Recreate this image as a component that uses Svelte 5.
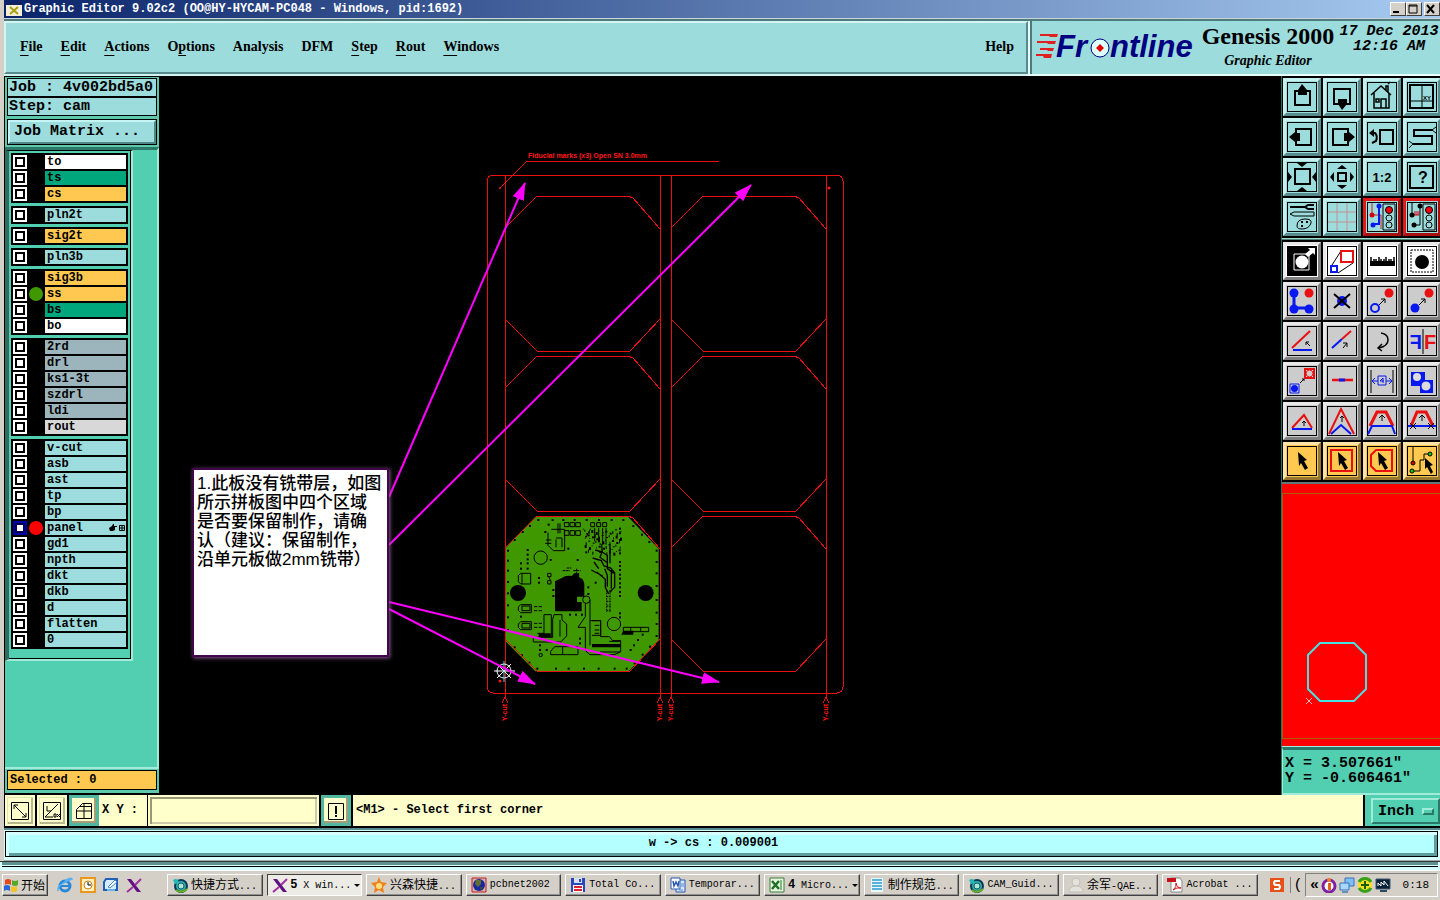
<script>
  const menus = [
    ['', 'F', 'ile'],
    ['', 'E', 'dit'],
    ['', 'A', 'ctions'],
    ['O', 'p', 'tions'],
    ['Analysis', '', ''],
    ['DFM', '', ''],
    ['', 'S', 'tep'],
    ['', 'R', 'out'],
    ['', 'W', 'indows'],
  ];

  const layerGroups = [
    [['to', 'white'], ['ts', 'green'], ['cs', 'orange']],
    [['pln2t', 'teal']],
    [['sig2t', 'orange']],
    [['pln3b', 'teal']],
    [['sig3b', 'orange'], ['ss', 'orange', '#409800'], ['bs', 'green'], ['bo', 'white']],
    [['2rd', 'slate'], ['drl', 'slate'], ['ks1-3t', 'slate'], ['szdrl', 'slate'], ['ldi', 'slate'], ['rout', 'silver']],
    [
      ['v-cut', 'teal'], ['asb', 'teal'], ['ast', 'teal'], ['tp', 'teal'], ['bp', 'teal'],
      ['panel', 'teal', '#ff0000'], ['gd1', 'teal'], ['npth', 'teal'], ['dkt', 'teal'],
      ['dkb', 'teal'], ['d', 'teal'], ['flatten', 'teal'], ['0', 'teal'],
    ],
  ];

  const R = '#e81010';
  const B = '#0818f0';
  const light = '<path d="M17 3h12v26H17z" fill="none" stroke="#000"/><circle cx="23" cy="9" r="3.5" fill="#f00010" stroke="#000"/><circle cx="23" cy="17" r="3" fill="none" stroke="#000"/><circle cx="23" cy="24" r="3" fill="none" stroke="#000"/>';
  const cursor = '<path d="M12 7l9 8-3 1 4 7-3 2-4-7-2 3z" fill="#000"/>';
  const smallArrow = '<path d="M13 20l6-6M15 14h4v4" fill="none" stroke="#000"/>';

  const viewTools = [
    ['Pan up', '<path d="M9 10h15v14H9z" fill="none" stroke="#000" stroke-width="2"/><path d="M16 3l5 6v5h-9V9z"/>'],
    ['Pan down', '<path d="M8 8h16v15H8z" fill="none" stroke="#000" stroke-width="2"/><path d="M16 29l5-6v-5h-9v5z"/>'],
    ['Home', '<path d="M5 14L15 5l10 9M8 12v15h15V12M15 27v-9h5v9M10 18h3v3h-3zM20 9V5h2v6M22 3l2-2" fill="none" stroke="#000" stroke-width="1.5"/>'],
    ['Zoom to XY', '<path d="M4 4h23v23H4z" fill="none" stroke="#000" stroke-width="2"/><path d="M16 4v23M4 20h23" stroke="#000"/><text x="17" y="19" font-size="6" font-family="Liberation Sans">XY</text>'],
    ['Pan left', '<path d="M10 8h15v16H10z" fill="none" stroke="#000" stroke-width="2"/><path d="M3 16l6-5v1h5v8H9v1z"/>'],
    ['Pan right', '<path d="M7 8h15v16H7z" fill="none" stroke="#000" stroke-width="2"/><path d="M29 16l-6-5v1h-5v8h5v1z"/>'],
    ['Previous view', '<path d="M14 9h13v14H14zM6 12h3q3 3 1 8l-4 2" fill="none" stroke="#000" stroke-width="2"/><path d="M3 12l5-4v8z"/>'],
    ['Serpentine', '<path d="M27 9H8v6h18v8H7" fill="none" stroke="#000" stroke-width="2"/><path d="M30 6l-4 3 4 3M3 20l4 3-4 4" fill="none" stroke="#000"/>'],
    ['Zoom in', '<path d="M9 8h15v15H9z" fill="none" stroke="#000" stroke-width="2"/><path d="M11 2h10l-5 4zM11 30h10l-5-4zM2 11v10l4-5zM30 11v10l-4-5z"/>'],
    ['Zoom out', '<path d="M12 12h8v8h-8z" fill="none" stroke="#000" stroke-width="2"/><path d="M11 8h10l-5-4zM11 24h10l-5 4zM8 11v10l-4-5zM24 11v10l4-5z"/>'],
    ['Zoom 1:2', '<text x="16" y="21" text-anchor="middle" font-size="13" font-weight="700" font-family="Liberation Sans">1:2</text>'],
    ['Query', '<path d="M4 5h23v22H4z" fill="none" stroke="#000" stroke-width="2"/><text x="17" y="22" text-anchor="middle" font-size="16" font-weight="700" font-family="Liberation Sans">?</text>'],
    ['Setup', '<path d="M4 6h16" stroke="#000" stroke-width="2"/><path d="M28 4h-6l-3 2 3 2h6" fill="none" stroke="#000" stroke-width="2"/><path d="M4 13l4-2h20v4H8z" fill="none" stroke="#000"/><path d="M11 25q0-7 8-7 7 0 6 4-2 6-9 6-5 0-5-3z" fill="none" stroke="#000"/><path d="M15 20h2v2h-2zM20 20h2v2h-2zM15 24h2v2h-2z"/>'],
    ['Grid', '<path d="M11 2v28M21 2v28M2 11h28M2 21h28" stroke="#c09090"/>'],
    ['Net highlight', '<path d="M6 2v12h9v14" fill="none" stroke="#d02020"/><path d="M13 5v18H7" fill="none" stroke="#0818f0" stroke-width="2"/><circle cx="6" cy="14" r="2.5" fill="#d00010"/><circle cx="13" cy="5" r="2.5" fill="#0818f0"/><circle cx="7" cy="24" r="2.5" fill="#0818f0"/>' + light, 'alert'],
    ['Net check', '<path d="M6 2v12M14 5v19H7" fill="none" stroke="#000"/><path d="M6 14h7M9 10v4M11 10v4M13 10v4" stroke="#d00010"/><circle cx="6" cy="14" r="2.5"/><circle cx="14" cy="5" r="2.5"/><circle cx="8" cy="24" r="2.5"/>' + light, 'alert'],
  ];

  const editTools = [
    ['Contour', '<path d="M2 2h28v28H2z"/><path d="M8 9h15v16H8z" fill="none" stroke="#fff"/><circle cx="16" cy="17" r="6.5" fill="#fff"/><path d="M19 9l5-4-2-2h7v7l-2-2-5 4z" fill="#fff"/>', 'white'],
    ['Scale', '<path d="M15 6L6 20M12 28l15-10" stroke="#000" fill="none"/><path d="M15 6h12v11H15z" fill="none" stroke="#e81010" stroke-width="2"/><path d="M5 21h6v6H5z" fill="none" stroke="#0818f0" stroke-width="2"/>', 'white'],
    ['Measure', '<path d="M4 16h25v5H4z"/><path d="M5 12v5M8 14v3M10 14v3M13 12v5M15 14v3M18 14v3M20 12v5M23 14v3M25 14v3M28 12v5" stroke="#000" stroke-width="1.5"/>', 'white'],
    ['Select pad', '<path d="M5 5h22v22H5z" fill="none" stroke="#000" stroke-dasharray="2 1"/><circle cx="16" cy="17" r="7"/>', 'white'],
    ['Copy', `<path d="M8 8v15h15" fill="none" stroke="${B}" stroke-width="3"/><circle cx="8" cy="8" r="4.5" fill="${B}"/><circle cx="8" cy="24" r="4.5" fill="${B}"/><circle cx="23" cy="24" r="4.5" fill="${B}"/><circle cx="23" cy="8" r="4.5" fill="${R}"/>`],
    ['Delete', `<circle cx="16" cy="16" r="5" fill="${B}"/><path d="M8 9l16 14M24 9L8 23" stroke="#000" stroke-width="2"/>`],
    ['Copy to', `<circle cx="9" cy="23" r="4" fill="none" stroke="${B}" stroke-width="2"/><circle cx="23" cy="8" r="4.5" fill="${R}"/>` + smallArrow],
    ['Move to', `<circle cx="9" cy="23" r="4.5" fill="${B}"/><circle cx="23" cy="8" r="4.5" fill="${R}"/>` + smallArrow],
    ['Rotate line', `<path d="M6 23L24 6" stroke="${R}" stroke-width="2"/><path d="M7 25h19" stroke="${B}" stroke-width="2"/><path d="M24 21l-4-4M20 20v-3h3" fill="none" stroke="#000"/>`],
    ['Stretch line', `<path d="M6 23l10-9" stroke="${B}" stroke-width="2"/><path d="M16 14l9-8" stroke="${R}" stroke-width="2"/><path d="M17 23l4-5M17 18h4v4" fill="none" stroke="#000"/>`],
    ['Rotate', '<path d="M15 8q7 1 7 7t-9 8M16 19l-4 4 4 3" fill="none" stroke="#000" stroke-width="1.5"/>'],
    ['Mirror', `<path d="M17 4v25" stroke="#000"/><text x="18" y="24" font-size="20" font-weight="700" fill="${R}" font-family="Liberation Sans">F</text><text x="-16" y="24" font-size="20" font-weight="700" fill="${B}" font-family="Liberation Sans" transform="scale(-1 1)">F</text>`],
    ['Replace', `<path d="M19 4h9v9h-9z" fill="#fff" stroke="${R}" stroke-width="2"/><circle cx="23.500" cy="8.500" r="3.500" fill="#ccc" stroke="${R}"/><path d="M4 19h9v9H4z" fill="none" stroke="${B}"/><circle cx="8.500" cy="23.500" r="3.500" fill="${B}"/><path d="M14 18l4-4M16 14h2v2" fill="none" stroke="#000"/>`],
    ['Break line', `<path d="M6 15h21" stroke="${R}" stroke-width="2.500"/><path d="M13 15h6" stroke="${B}" stroke-width="3"/>`],
    ['Spacing', `<path d="M5 5v23M27 5v23" stroke="#000"/><path d="M12 11h8v9h-8zM12 16H6l3-3M6 16l3 3M20 16h6l-3-3M26 16l-3 3M17 18v-5l-3 3h4" fill="none" stroke="${B}"/>`],
    ['Merge', `<path d="M5 7h14v8h8v13H14v-7H5z" fill="${B}"/><circle cx="11" cy="12" r="4" fill="#ddd"/><circle cx="20" cy="21" r="5" fill="#ddd" stroke="${B}"/>`],
    ['Corner move', `<path d="M6 23L18 10l8 13" fill="none" stroke="${R}" stroke-width="2"/><path d="M6 24h20" stroke="${B}" stroke-width="2"/><path d="M18 21v-5M16 18l2-2 2 2" fill="none" stroke="#000"/>`],
    ['Corner stretch', `<path d="M3 29L15 4l13 25" fill="none" stroke="${R}" stroke-width="2"/><path d="M5 29l10-9 10 9" fill="none" stroke="${B}" stroke-width="2"/><path d="M16 17v-6M14 13l2-2 2 2" fill="none" stroke="#000"/>`],
    ['Segment move', `<path d="M4 21l7-14h9l7 14" fill="none" stroke="${R}" stroke-width="3"/><path d="M2 29l4-8h20l3 8" fill="none" stroke="${B}" stroke-width="2"/><path d="M16 16v-6M13 13l3-3 3 3" fill="none" stroke="#000"/>`],
    ['Segment trim', `<path d="M5 21l6-14h9l7 14" fill="none" stroke="${R}" stroke-width="3"/><path d="M2 21h28" stroke="${B}" stroke-width="2"/><path d="M16 16v-6M13 13l3-3 3 3M4 18l6 6M10 18l-6 6M22 18l6 6M28 18l-6 6" fill="none" stroke="#000"/>`],
    ['Select', cursor, 'gold'],
    ['Select in frame', `<path d="M5 5h21v21H5z" fill="none" stroke="${R}" stroke-width="2"/>` + cursor, 'gold'],
    ['Select in polygon', `<path d="M10 5h16v21H10l-5-5V10z" fill="none" stroke="${R}" stroke-width="2"/>` + cursor, 'gold'],
    ['Select net', '<path d="M7 2v16M6 26h8V15h4V9h6" fill="none" stroke="#000"/><circle cx="7" cy="18" r="2" fill="#d00" stroke="#000"/><circle cx="6" cy="26" r="2" fill="#1c1" stroke="#000"/><circle cx="24" cy="9" r="2" fill="#1c1" stroke="#000"/><path d="M19 13l8 7-3 1 3 6-2 2-4-7-2 2z"/>', 'gold'],
  ];

  const cells = [
    [0, 0], [166, 0], [0, 160], [166, 160], [0, 320], [166, 320],
  ];
  const scores = [505, 660, 671, 826];

  // drill dots on the board, in thirds of a pixel
  const dots = [
    ...[175, 218, 250, 284, 320, 357, 395, 430].map((x) => [x, 60]),
    ...[172, 228, 266, 312, 356, 404, 440].map((x) => [x, 506]),
    ...[152, 182, 212, 246, 280, 316, 352, 390].map((y) => [84, y]),
    ...[152, 186, 220, 258, 300, 338, 372, 408].map((y) => [530, y]),
    [104, 120], [128, 96], [150, 78], [460, 78], [486, 104], [508, 126],
    [104, 442], [126, 466], [148, 488], [464, 490], [488, 464], [510, 440],
    ...[150, 164, 178, 190, 206].map((y) => [143, y]),
    ...[190, 206, 350].map((y) => [123, y]),
    ...[86, 100, 120, 160, 186, 198, 210, 224, 236, 250, 262, 276, 288, 340, 352].map((y) => [420, y]),
    [212, 180], [293, 180], [177, 234], [177, 248], [265, 146], [325, 262], [325, 282], [347, 248],
    [220, 270], [220, 288], [270, 344], [288, 344], [306, 344], [180, 436], [180, 450], [200, 450],
    [300, 416], [300, 430], [452, 450], [462, 436], [474, 420], [488, 404], [206, 74], [196, 96],
  ];
  // fan-out area at the top right of the board
  const fan = [];
  for (let i = 0; i < 64; i++) {
    fan.push([308 + ((i * 41) % 113), 86 + ((i * 29) % 73), 3 + (i % 2) * 3, 3 + (i % 3) * 3]);
  }

  const tasks = [
    { icon: 'globe', cjk: '快捷方式', text: '...' },
    { icon: 'x', count: '5', text: 'X win...', active: true, more: true },
    { icon: 'star', cjk: '兴森快捷', text: '...' },
    { icon: 'earth', text: 'pcbnet2002' },
    { icon: 'floppy', text: 'Total Co...' },
    { icon: 'word', text: 'Temporar...' },
    { icon: 'excel', count: '4', text: 'Micro...', more: true },
    { icon: 'doc', cjk: '制作规范', text: '...' },
    { icon: 'globe', text: 'CAM_Guid...' },
    { icon: 'user', cjk: '余军', text: '-QAE...' },
    { icon: 'pdf', text: 'Acrobat ...' },
  ];

  const taskIcons = {
    flag: '<path d="M2 3q3-2 6 0v5q-3-2-6 0z" fill="#e84a20"/><path d="M9 3q3 2 6 0v5q-3 2-6 0z" fill="#58a828"/><path d="M1 9q3-2 6 0v5q-3-2-6 0z" fill="#2868d8"/><path d="M8 9q3 2 6 0v5q-3 2-6 0z" fill="#f8c020"/>',
    ie: '<circle cx="8" cy="9" r="5" fill="none" stroke="#2888d8" stroke-width="3"/><path d="M4 9h9" stroke="#2888d8" stroke-width="2"/><path d="M1 14Q-1 8 15 2q-2-2-7 2" fill="none" stroke="#58b0f0" stroke-width="1.5"/>',
    clock: '<path d="M1 1h14v14H1z" fill="#fff0c0" stroke="#e89820" stroke-width="2"/><circle cx="8" cy="8" r="4" fill="#fff" stroke="#c88020"/><path d="M8 5v3h3" fill="none" stroke="#000"/>',
    desktop: '<path d="M3 2h11v11H1V5z" fill="#d8ecff" stroke="#2060b8" stroke-width="2"/><path d="M5 10l7-7 2 2-7 6z" fill="#fff" stroke="#4088c8"/><path d="M4 13h8" stroke="#68b0e8" stroke-width="2"/>',
    x: '<path d="M1 2h4l10 13h-4z" fill="#601080"/><path d="M15 2L9 8M7 10l-6 5" stroke="#a030a0" stroke-width="2"/>',
    globe: '<circle cx="9" cy="9" r="6" fill="#30b0a0" stroke="#083858" stroke-width="2"/><circle cx="9" cy="9" r="3" fill="#a8e8d0" stroke="#185878"/><path d="M1 3q5-3 6 3l-4 1z" fill="#20b8b8"/><path d="M4 13q5 4 11-1" stroke="#70b020" stroke-width="2" fill="none"/>',
    star: '<path d="M8 0l2 5 6 1-4 4 1 6-5-3-5 3 1-6-4-4 6-1z" fill="#f08018"/><circle cx="8" cy="9" r="3" fill="#ffe080"/>',
    earth: '<path d="M1 1h14v14H1z" fill="#d8b0b0" stroke="#c02020"/><circle cx="8" cy="8" r="6" fill="#1828a0"/><path d="M5 3h5v4l-3 3-3-3z" fill="#607030"/><path d="M9 10h3l-2 4z" fill="#405020"/>',
    floppy: '<path d="M1 1h14v14H1z" fill="#2848c0"/><path d="M4 1h8v5H4z" fill="#d8e0f0"/><path d="M3 8h10v7H3z" fill="#fff"/><path d="M4 10h8M4 13h8" stroke="#e02030" stroke-width="2"/><path d="M9 2h2v3H9z" fill="#2848c0"/>',
    word: '<path d="M6 3h9v12H6z" fill="#d8e8ff" stroke="#2858b0"/><path d="M1 1h9v11H1z" fill="#fff" stroke="#2858b0"/><path d="M3 4l1 5 2-4 2 4 1-5" fill="none" stroke="#2858b0" stroke-width="1.5"/><path d="M11 7h3M11 9h3M9 13h4" stroke="#5888d0"/>',
    excel: '<path d="M1 1h14v14H1z" fill="#e8f4e0" stroke="#388038"/><path d="M3 4l7 8M10 4l-7 8" stroke="#207028" stroke-width="2.500"/><path d="M12 3v10" stroke="#80b880" stroke-width="2"/>',
    doc: '<path d="M2 1h12v14H2z" fill="#e8f8ff"/><path d="M3 3h10M3 6h10M3 9h10M3 12h10" stroke="#2898d0" stroke-width="1.5"/>',
    user: '<circle cx="8" cy="5" r="4" fill="#e4e2dc" stroke="#c4c0b8"/><path d="M1 15q0-6 7-6t7 6z" fill="#e4e2dc" stroke="#c4c0b8"/>',
    pdf: '<path d="M4 1h9l2 3v11H4z" fill="#fff" stroke="#888"/><path d="M0 1h9v4H0z" fill="#c81018"/><path d="M6 13q4-3 3-7 1 5 5 5-4-1-8 2" fill="none" stroke="#d01018"/>',
    sogou: '<path d="M1 1h14v14H1z" fill="#e85018"/><path d="M11 4H6q-2 2 0 4h4q2 2 0 4H5" fill="none" stroke="#fff" stroke-width="2"/>',
    agent: '<circle cx="8" cy="9" r="6" fill="#fff" stroke="#8020a0" stroke-width="3"/><circle cx="8" cy="3" r="2" fill="#f08020"/><path d="M7 6h3v7H7z" fill="#e06020"/>',
    net: '<path d="M6 1h9v8H6z" fill="#80c0f8" stroke="#3870b8"/><path d="M1 6h9v7H1z" fill="#a8d8ff" stroke="#3870b8"/><path d="M3 15h6" stroke="#6890b8" stroke-width="2"/>',
    guard: '<circle cx="8" cy="8" r="7" fill="#f8e020"/><path d="M2 5a7 7 0 0 1 12 0M2 11a7 7 0 0 0 12 0" fill="none" stroke="#38a018" stroke-width="3"/><path d="M8 4v8M4 8h8" stroke="#186010" stroke-width="2"/>',
    screen: '<path d="M1 2h14v10H1z" fill="#082038" stroke="#405870"/><path d="M3 9V6l3 3V5l3 3V4l4 5" fill="none" stroke="#fff"/><path d="M5 14h7" stroke="#304860" stroke-width="2"/>',
  };
</script>

{#snippet glyph(name)}
  <svg class="glyph" viewBox="0 0 16 16" aria-hidden="true">{@html taskIcons[name]}</svg>
{/snippet}

{#snippet tool([label, art, tone])}
  <button class="tool {tone ?? ''}" aria-label={label}>
    <svg viewBox="0 0 32 32" aria-hidden="true">
      <rect x="1.5" y="1.5" width="29" height="29" fill="none" stroke="#000" />
      {@html art}
    </svg>
  </button>
{/snippet}

<div class="screen">
  <div class="window">
    <header class="titlebar">
      <svg class="app-icon" viewBox="0 0 16 14" aria-hidden="true">
        <path d="M0 0h16v14H0z" fill="#f4f0d8" />
        <path d="M0 0h16v3H0z" fill="#102060" />
        <path d="M4 5l8 7M12 5l-8 7" stroke="#a8a010" stroke-width="2" />
      </svg>
      <h1>Graphic Editor 9.02c2 (OO@HY-HYCAM-PC048 - Windows, pid:1692)</h1>
      <div class="controls">
        <button aria-label="Minimize"><svg viewBox="0 0 12 10"><path d="M2 8h6" stroke="#000" stroke-width="2" /></svg></button>
        <button aria-label="Maximize"><svg viewBox="0 0 12 10"><path d="M2 1h8v8H2zM2 2h8" fill="none" stroke="#000" /></svg></button>
        <button class="close" aria-label="Close"><svg viewBox="0 0 12 10"><path d="M2 1l7 8M9 1L2 9" stroke="#000" stroke-width="2" /></svg></button>
      </div>
    </header>

    <div class="top">
      <nav class="menu">
        {#each menus as [before, key, after]}
          <button>{before}{#if key}<u>{key}</u>{/if}{after}</button>
        {/each}
        <button class="help">Help</button>
      </nav>
      <div class="brand">
        <svg class="logo" viewBox="0 0 162 50" role="img" aria-label="Frontline">
          <path d="M4 13h18l-1 3h-7l-1-1H4zM1 20h19l-1 3h-7l-1-1H1zM4 27h14l-1 3h-5l-1-1H4zM0 33h16l-1 4H8l-1-2H0z" fill="#e02020" />
          <text x="20" y="36">Fr</text>
          <text x="74" y="36">ntline</text>
          <circle cx="64" cy="27" r="9" fill="#dff" stroke="#000080" />
          <path d="M64 23l4 4-4 4-4-4z" fill="#e00000" />
        </svg>
        <div class="product">
          <strong>Genesis 2000</strong>
          <em>Graphic Editor</em>
        </div>
        <div class="date">17 Dec 2013<br />12:16 AM</div>
      </div>
    </div>

    <main>
      <aside class="left">
        <div class="job">
          <div>Job : 4v002bd5a0</div>
          <div>Step: cam</div>
        </div>
        <div class="matrix"><button>Job Matrix ...</button></div>
        <div class="layer-area">
          <div class="layers">
            {#each layerGroups as group}
              <div class="group">
                {#each group as [name, tone, color]}
                  <label class="layer">
                    <input type="checkbox" class:work={name === 'panel'} checked={name === 'panel'} />
                    <span class="dot" style:background={color}></span>
                    <span class="name {tone}">
                      {name}
                      {#if name === 'panel'}
                        <svg viewBox="0 0 16 8" aria-hidden="true">
                          <path d="M0 4l3-2 1-2h1v2h3v1H6v3l-2 1H1z" />
                          <path d="M10.500 1.500h5v5h-5zM13 1.500v5M10.500 4h5" fill="none" stroke="#000" />
                        </svg>
                      {/if}
                    </span>
                  </label>
                {/each}
              </div>
            {/each}
          </div>
        </div>
        <div class="selected"><span>Selected : 0</span></div>
      </aside>

      <section class="canvas">
        <svg class="drawing" viewBox="159 76 1122 719" preserveAspectRatio="xMinYMin" role="img" aria-label="Panel drawing">
          <defs>
            <marker id="head" markerUnits="userSpaceOnUse" markerWidth="20" markerHeight="14" refX="17" refY="6" orient="auto">
              <path d="M0 0l18 6-18 6z" fill="#ff00ff" />
            </marker>
          </defs>

          <g transform="translate(480 500) scale(0.33333)">
            <path d="M166 50h278l92 96v276l-90 92H166l-91-92V146z" fill="#409800" />
            <g fill="#000">
              <circle cx="114" cy="279" r="24" />
              <circle cx="497" cy="279" r="24" />
              <path d="M225 244l20-10q10-8 30-6l8-8h14v12q14 4 16 20v38h-22v16h14v28h-80z" />
              <path d="M176 400h36v10h-36zM336 432h84v10h-84zM430 392h30v12h-36z" />
              {#each dots as [x, y]}
                <rect x={x - 3} y={y - 3} width="6" height="6" />
              {/each}
              {#each fan as [x, y, w, h]}
                <rect {x} {y} width={w} height={h} />
              {/each}
            </g>
            <g fill="none" stroke="#000" stroke-width="3">
              <circle cx="182" cy="173" r="20" />
              <circle cx="402" cy="372" r="20" />
              <circle cx="319" cy="299" r="11" />
              <circle cx="182" cy="465" r="5" />
              <path d="M122 220h30v32h-30l-7-7v-18zM122 314h32v24h-32l-7-7v-10zM122 365h32v24h-32l-7-7v-10zM126 220v32M126 318h24v14h-24zM126 370h24v14h-24z" />
              <path d="M162 320h10M176 320h10M162 332h10M176 332h10M162 370h10M176 370h10M162 382h10M176 382h10M203 220h10v10h-10zM203 242h10v10h-10zM206 230l6 12" />
              <path d="M192 344h22v66h-38M192 344v56h-20M222 344h24v16l14 12v36l-18 18h-82v-14h58v-54zM240 360v50" />
              <path d="M316 310v40l-22 32h22v70l14 12h72l20-8v-34h-24l-10-12h-26v-48h-32M330 300v136M336 362h26v44h-26M344 376h14M344 390h14M344 400h14" />
              <path d="M212 454l12-14h70v24h-82zM248 440v24M360 456h60M388 424h32" />
              <path d="M430 382h76v13h-76zM452 382v13M482 382v13" />
              <path d="M253 68h14v12h-14zM270 68h14v12h-14zM287 68h14v12h-14zM253 92h14v14h-14zM270 92h14v14h-14zM287 92h14v14h-14zM332 68h12v12h-12zM350 68h12v12h-12zM368 68h12v12h-12z" />
              <path d="M214 88h40v64h-34l-14-14M228 114h18v28M228 118v24M234 70v30M240 70v30M204 98v40M198 120h16M196 130h18M332 86l-16 30M344 84v40M356 84v34M368 84v50M378 84v50" />
              <path d="M248 212h22M260 204h14M280 212h22M290 206v48M296 220v42h-18M284 220v44M264 276h20M284 280v54" stroke-dasharray="8 2" />
              <path d="M346 150l20 6-6 16 22 16M338 174l26 8 8 16 20 6 12 14v44l-14 14M366 140v16l16 10v40l20 14M334 210l34 18M350 216l26 22v24l10 20M342 186l14 20M390 130v60M374 206l8 20v34M394 210v56" stroke-width="4" />
              <path d="M380 270v66M390 270v66M380 276h12M380 290h12M380 304h12M380 318h12M380 332h12" stroke-dasharray="5 3" />
            </g>
          </g>

          <g fill="none" stroke="#e81010" shape-rendering="crispEdges">
            <rect x="487" y="175" width="356" height="518" rx="6" />
            {#each cells as [dx, dy]}
              <path d="M537 196h91l5 2 27 31v90l-30 32h-93l-32-32v-91z" transform="translate({dx} {dy})" />
            {/each}
            {#each scores as x}
              <path d="M{x} 175v522m-3 6 3-6 3 6" />
            {/each}
            <path d="M500 188l27-27h192" />
          </g>
          <g fill="#ff1818">
            <circle cx="500" cy="188" r="1" />
            <circle cx="829" cy="188" r="1.5" />
            <circle cx="500" cy="681" r="1.5" />
            <text x="528" y="158" class="cad">Fiducial marks (x3) Open SN 3.0mm</text>
            {#each scores as x}
              <text class="cad" transform="translate({x + 2} 721) rotate(-90)">Y-cut</text>
            {/each}
          </g>

          <g fill="none" stroke="#fff">
            <circle cx="504" cy="671" r="7" />
            <path d="M494 671h21M497 664l14 14M511 664l-14 14" />
            <path d="M504 661v21" stroke="#40e8f8" />
          </g>

          <g stroke="#ff00ff" stroke-width="2">
            <path d="M389 497L525 183" marker-end="url(#head)" />
            <path d="M389 545L751 185" marker-end="url(#head)" />
            <path d="M389 602L719 682" marker-end="url(#head)" />
            <path d="M389 609L535 684" marker-end="url(#head)" />
          </g>
        </svg>
        <p class="note">
          1.此板没有铣带层，如图<br />所示拼板图中四个区域<br />是否要保留制作，请确<br />认（建议：保留制作，<br />沿单元板做2mm铣带）
        </p>
      </section>

      <aside class="right">
        <div class="tools">
          {#each viewTools as item}{@render tool(item)}{/each}
        </div>
        <div class="tools edit">
          {#each editTools as item}{@render tool(item)}{/each}
        </div>
        <div class="preview">
          <div class="extent">
            <svg viewBox="0 0 64 64" aria-hidden="true">
              <path d="M14 2h34l12 12v34L48 60H14L2 48V14z" fill="none" stroke="#48e0e0" stroke-width="2" />
              <path d="M0 57l6 6M6 57l-6 6" stroke="#ffb0b0" />
            </svg>
          </div>
        </div>
        <div class="coords">X = 3.507661"<br />Y = -0.606461"</div>
      </aside>
    </main>

    <div class="prompt">
      <button class="mini" aria-label="Diagonal">
        <svg viewBox="0 0 20 20"><path d="M1.500 1.500h17v17h-17zM4 4l12 12M4 8V4h4M16 12v4h-4" fill="none" stroke="#000" /></svg>
      </button>
      <button class="mini" aria-label="Angle">
        <svg viewBox="0 0 20 20"><path d="M1.500 1.500h17v17h-17zM3 16L16 3M3 16h8M5 5v5h4M12 13h2v3h-2zM15 16l3-3M15 13l3 3" fill="none" stroke="#000" /></svg>
      </button>
      <button class="mini framed" aria-label="Snap grid">
        <svg viewBox="0 0 20 20"><path d="M2.500 17.500v-9l6-6h9v15zM2.500 10h15M10 2.500v15M6 5.500h11" fill="none" stroke="#000" /></svg>
      </button>
      <label for="xy">X Y :</label>
      <input id="xy" type="text" />
      <button class="mini framed" aria-label="Apply">
        <svg viewBox="0 0 20 20"><path d="M2.500 2.500h15v16h-15z" fill="none" stroke="#000" /><path d="M10 5v8M10 14v2" stroke="#000" stroke-width="2" /></svg>
      </button>
      <output>&lt;M1&gt; - Select first corner</output>
      <div class="unit"><button>Inch <i></i></button></div>
    </div>

    <div class="status"><div>w -&gt; cs : 0.009001</div></div>
  </div>
  <div class="lower-window"><div></div></div>

  <footer class="taskbar">
    <button class="start">{@render glyph('flag')}<span class="cjk">开始</span></button>
    <div class="quick">
      <button aria-label="Internet Explorer">{@render glyph('ie')}</button>
      <button aria-label="Outlook">{@render glyph('clock')}</button>
      <button aria-label="Show desktop">{@render glyph('desktop')}</button>
      <button aria-label="Exceed">{@render glyph('x')}</button>
    </div>
    <div class="tasks">
      {#each tasks as task}
        <button class="task" class:active={task.active}>
          {@render glyph(task.icon)}
          <span class="label">{#if task.count}<b>{task.count}</b>&nbsp;{/if}{#if task.cjk}<span class="cjk">{task.cjk}</span>{/if}{task.text}</span>
          {#if task.more}<i class="more"></i>{/if}
        </button>
      {/each}
    </div>
    <button class="ime" aria-label="Sogou input">{@render glyph('sogou')}</button>
    <span class="lang">(</span>
    <div class="tray">
      <b>«</b>
      {@render glyph('agent')}
      {@render glyph('net')}
      {@render glyph('guard')}
      {@render glyph('screen')}
      <time>0:18</time>
    </div>
  </footer>
</div>

<style>
  :global(body) {
    margin: 0;
    background: #d4d0c8;
  }

  .screen {
    --mono: "Liberation Mono", "Courier New", monospace;
    --serif: "Liberation Serif", "Times New Roman", serif;
    --teal: #9cdcdc;
    --green: #52ceb0;
    --dark: #2c7868;
    --cream: #ffffcc;
    display: flex;
    flex-direction: column;
    min-height: 100vh;
    overflow: hidden;
    color: #000;
    font-family: var(--mono);
    font-size: 12px;
    font-weight: bold;
  }

  * {
    box-sizing: border-box;
  }

  button {
    padding: 0;
    border: 0;
    background: none;
    color: inherit;
    font: inherit;
  }

  svg {
    display: block;
  }

  .window {
    display: flex;
    flex: 1;
    flex-direction: column;
    border-left: 4px solid #d4d0c8;
  }

  .titlebar {
    display: flex;
    align-items: center;
    height: 19px;
    padding-left: 2px;
    background: linear-gradient(90deg, #0a246a, #a6caf0);
    border-bottom: 1px solid #c8d4d8;
    color: #fff;
  }

  .app-icon {
    width: 16px;
    height: 14px;
    margin-right: 2px;
  }

  h1 {
    flex: 1;
    margin: 0;
    font-size: 12px;
    line-height: 18px;
  }

  .controls {
    display: flex;
  }

  .controls button {
    width: 16px;
    height: 14px;
    background: #d4d0c8;
    border: 1px solid;
    border-color: #fff #404040 #404040 #fff;
  }

  .controls .close {
    margin-left: 2px;
  }

  .controls svg {
    width: 12px;
    height: 10px;
  }

  .top {
    display: flex;
    height: 57px;
    background: var(--teal);
    border-top: 2px solid #4c7c7c;
  }

  .menu {
    display: flex;
    flex: 1;
    align-items: center;
    gap: 18px;
    padding: 0 12px 2px 14px;
    border: 2px solid;
    border-color: #d4f4f4 #588c8c #588c8c #d4f4f4;
    box-shadow: 0 2px 0 #d4f4f4;
    margin-bottom: 2px;
    font-family: var(--serif);
    font-size: 14px;
  }

  .menu .help {
    margin-left: auto;
  }

  .menu u {
    text-underline-offset: 4px;
  }

  .brand {
    display: flex;
    width: 412px;
    padding-left: 6px;
    border-left: 2px solid #e8ffff;
    border-bottom: 2px solid #e8ffff;
    box-shadow: inset 2px 0 0 #4c7c7c;
  }

  .logo {
    width: 162px;
    height: 50px;
    font-family: "Liberation Sans", Arial, sans-serif;
    font-size: 31px;
    font-weight: bold;
    font-style: italic;
    fill: #000080;
  }

  .product {
    display: flex;
    flex-direction: column;
    align-items: center;
    width: 140px;
    font-family: var(--serif);
    white-space: nowrap;
  }

  .product strong {
    font-size: 24px;
    line-height: 30px;
  }

  .product em {
    font-size: 14px;
    line-height: 20px;
  }

  .date {
    flex: 1;
    padding-top: 3px;
    font-size: 15px;
    font-style: italic;
    line-height: 15px;
    text-align: center;
    white-space: nowrap;
  }

  main {
    display: flex;
    flex: 1;
    background: #000;
  }

  .left {
    display: flex;
    flex-direction: column;
    width: 155px;
    padding-left: 1px;
  }

  .job {
    padding: 1px 2px 2px;
    background: #5cc8ac;
    border-top: 1px solid #000;
    font-size: 15px;
  }

  .job div {
    height: 19px;
    padding-left: 1px;
    background: var(--teal);
    border: 1px solid #000;
    line-height: 17px;
    white-space: nowrap;
  }

  .matrix {
    padding: 1px 2px 2px;
    background: #5cc8ac;
  }

  .matrix button {
    width: 100%;
    height: 26px;
    padding-left: 4px;
    background: var(--teal);
    border: 3px solid;
    border-color: #c4f4f4 #508888 #508888 #c4f4f4;
    outline: 1px solid #000;
    outline-offset: -1px;
    font-size: 15px;
    line-height: 20px;
    text-align: left;
  }

  .layer-area {
    flex: 1;
    background: var(--green);
    border: solid;
    border-width: 3px 2px 2px 0;
    border-color: var(--dark) #a0ecd8 #a0ecd8;
  }

  .layers {
    width: 128px;
    padding: 2px 3px 7px 2px;
    border: solid;
    border-width: 1px 2px 2px 4px;
    border-color: #000 #a0ecd8 #a0ecd8 #306c60;
    box-shadow: inset -1px -1px 0 #000;
  }

  .group {
    display: grid;
    gap: 2px;
    margin-bottom: 3px;
    padding: 2px;
    background: #000;
  }

  .layer {
    display: flex;
    height: 14px;
  }

  .layer input {
    width: 14px;
    height: 14px;
    margin: 0;
    appearance: none;
    background: linear-gradient(#fff, #fff) center / 6px 6px no-repeat #000;
    border: 2px solid #fff;
  }

  .layer .work {
    background-color: #000058;
    border-color: #0000a8;
  }

  .dot {
    width: 14px;
    height: 14px;
    margin: 0 2px;
    border-radius: 50%;
  }

  .name {
    display: flex;
    flex: 1;
    align-items: center;
    justify-content: space-between;
    padding: 0 1px 0 2px;
    line-height: 14px;
  }

  .name svg {
    width: 16px;
    height: 8px;
  }

  .white {
    background: #fff;
  }

  .name.green {
    background: #00a67c;
  }

  .orange {
    background: #ffc850;
  }

  .teal {
    background: var(--teal);
  }

  .slate {
    background: #9cb4bc;
  }

  .silver {
    background: #d8d8d8;
  }

  .selected {
    padding: 1px 2px 3px;
    background: #5cc8ac;
    border-bottom: 2px solid #000;
  }

  .selected span {
    display: block;
    height: 20px;
    padding-left: 2px;
    background: #ffc850;
    border: 1px solid #000;
    line-height: 18px;
  }

  .canvas {
    position: relative;
    flex: 1;
    overflow: hidden;
  }

  .drawing {
    width: 100%;
    height: 100%;
  }

  .cad {
    font-family: "Liberation Sans", Arial, sans-serif;
    font-size: 7px;
    font-weight: bold;
  }

  /* callout pinned on the drawing */
  .note {
    position: absolute;
    top: 392px;
    left: 33px;
    width: 197px;
    height: 189px;
    margin: 0;
    padding: 4px 3px;
    background: #fff;
    border: 2px solid #400848;
    box-shadow: 1px 1px 4px #905898;
    font-family: "Liberation Sans", "Noto Sans CJK SC", sans-serif;
    font-size: 17px;
    font-weight: 500;
    line-height: 19px;
    white-space: nowrap;
  }

  .right {
    display: flex;
    flex-direction: column;
    width: 159px;
    overflow: hidden;
    border-left: 1px solid #306c60;
  }

  .tools {
    display: grid;
    grid-template-columns: repeat(4, 38px);
    gap: 2px;
    padding: 2px 0 2px 1px;
    border-bottom: 1px solid #a0dcd0;
  }

  .tools.edit {
    padding-top: 2px;
    border-top: 1px solid #508070;
    border-bottom: 2px solid #607878;
  }

  .tool {
    width: 38px;
    height: 38px;
    background: var(--teal);
    border: 3px solid;
    border-color: #c4f0f0 #588c8c #588c8c #c4f0f0;
  }

  .edit .tool {
    background: #ccc;
    border-color: #e8e8e8 #808080 #808080 #e8e8e8;
  }

  .edit .white {
    background: #fff;
  }

  .edit .gold {
    background: #ffc850;
    border-color: #ffe4a8 #987830 #987830 #ffe4a8;
  }

  .tool.alert {
    border-color: #e01818 #a81010 #a81010 #e01818;
  }

  .tool svg {
    width: 32px;
    height: 32px;
  }

  .preview {
    flex: 1;
    padding: 9px 0 7px;
    background: #f00;
    border-bottom: 1px solid #602020;
  }

  .extent {
    display: flex;
    align-items: flex-end;
    height: 100%;
    padding: 0 0 33px 23px;
    border: 1px solid #a86000;
    border-right: 0;
  }

  .extent svg {
    width: 64px;
    height: 64px;
  }

  .coords {
    height: 48px;
    padding: 6px 2px 0;
    background: var(--green);
    border: solid;
    border-width: 3px 0 2px 1px;
    border-color: var(--dark) #a0ecd8 #a0ecd8;
    box-shadow: 0 -1px 0 #a0ecd8;
    font-size: 15px;
    line-height: 15px;
  }

  .prompt {
    display: flex;
    align-items: stretch;
    gap: 2px;
    height: 31px;
    padding-left: 1px;
    background: #000;
  }

  .mini {
    display: grid;
    place-items: center;
    width: 30px;
    background: var(--cream);
    box-shadow: inset 0 0 0 2px var(--cream), inset 3px 3px 0 #e4e4b0, inset -4px -4px 0 #b8b890;
  }

  .mini.framed {
    box-shadow: inset 0 0 0 3px #50b8a0, inset -5px -5px 0 #a89c78;
  }

  .mini svg {
    width: 20px;
    height: 20px;
  }

  .prompt label {
    width: 48px;
    margin-left: -2px;
    padding-left: 3px;
    background: var(--cream);
    line-height: 30px;
    white-space: nowrap;
  }

  .prompt input {
    width: 171px;
    height: 31px;
    margin-left: -1px;
    padding: 0 6px;
    background: var(--cream);
    border: 2px solid var(--cream);
    border-radius: 0;
    box-shadow: inset 2px 2px 0 #989874, inset -2px -2px 0 #ccccaa;
    outline: 0;
    font: inherit;
  }

  output {
    flex: 1;
    padding-left: 3px;
    background: var(--cream);
    line-height: 30px;
  }

  .unit {
    width: 75px;
    padding: 3px 0 2px 6px;
    background: var(--green);
  }

  .unit button {
    display: flex;
    align-items: center;
    justify-content: space-between;
    width: 100%;
    height: 26px;
    padding: 0 4px 0 5px;
    border: 2px solid;
    border-color: #a0ecd8 var(--dark) var(--dark) #a0ecd8;
    font-size: 15px;
  }

  .unit i {
    width: 12px;
    height: 7px;
    border: 2px solid;
    border-color: #a0ecd8 var(--dark) var(--dark) #a0ecd8;
  }

  .status {
    height: 35px;
    padding: 3px 2px 4px 1px;
    background: #d8ffff;
    border-top: 2px solid #000;
    border-bottom: 1px solid #a8a8a8;
    box-shadow: inset 0 2px 0 #588c8c;
  }

  .status div {
    height: 26px;
    padding-right: 16px;
    background: #b4ffff;
    border: 1px solid #000;
    box-shadow: inset 3px 3px 0 #d8ffff, inset -3px -3px 0 #609c9c;
    line-height: 22px;
    text-align: center;
  }

  .lower-window {
    height: 9px;
    padding: 0 2px 2px;
    background: #d4ffff;
    border-top: 1px solid #303838;
  }

  .lower-window div {
    height: 5px;
    border-top: 3px solid #609090;
    border-bottom: 1px solid #000;
  }

  .taskbar {
    display: flex;
    align-items: center;
    height: 30px;
    padding: 0 2px 1px;
    background: #d4d0c8;
    border-top: 1px solid #fff;
    font-size: 10px;
    font-weight: normal;
  }

  .glyph {
    flex: none;
    width: 16px;
    height: 16px;
  }

  .cjk {
    font-family: "Noto Sans CJK SC", sans-serif;
    font-size: 12px;
  }

  .start,
  .task {
    display: flex;
    align-items: center;
    gap: 3px;
    height: 22px;
    border: 1px solid;
    border-color: #fff #404040 #404040 #fff;
    box-shadow: inset -1px -1px 0 #909090;
    line-height: 20px;
    white-space: nowrap;
  }

  .start {
    width: 46px;
    gap: 2px;
  }

  .quick {
    display: flex;
    gap: 7px;
    width: 119px;
    padding-left: 9px;
  }

  .tasks {
    display: flex;
    flex: 1;
    gap: 4px;
  }

  .task {
    flex: 1;
    min-width: 0;
    padding-left: 4px;
    overflow: hidden;
  }

  .task.active {
    background: #ecebe6;
    border-color: #404040 #fff #fff #404040;
    box-shadow: none;
  }

  .label b {
    font-family: "Liberation Sans", Arial, sans-serif;
    font-size: 12px;
  }

  .more {
    margin: 0 4px 0 auto;
    border: 3px solid transparent;
    border-top-color: #000;
    border-bottom: 0;
  }

  .ime {
    padding: 0 5px 0 11px;
    border-right: 1px solid #808080;
  }

  .lang {
    width: 14px;
    font-size: 15px;
    text-align: center;
  }

  .tray {
    display: flex;
    align-items: center;
    gap: 2px;
    width: 133px;
    height: 24px;
    padding: 0 8px 0 4px;
    border: 1px solid;
    border-color: #808080 #fff #fff #808080;
  }

  .tray b {
    font-size: 15px;
  }

  time {
    margin-left: auto;
    font-size: 11px;
  }
</style>
